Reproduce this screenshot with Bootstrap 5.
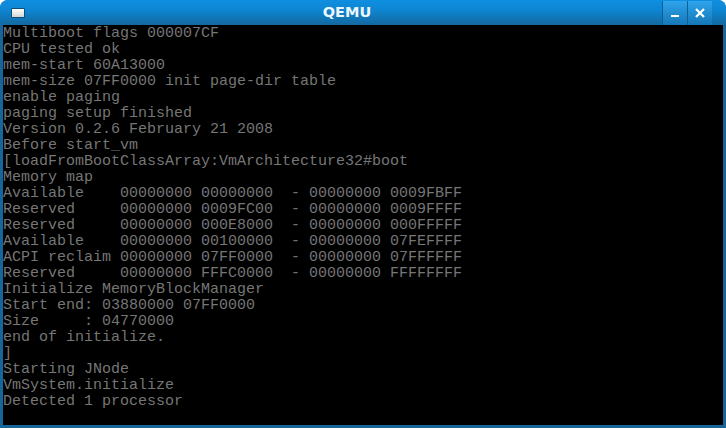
<!DOCTYPE html>
<html lang="en">
<head>
<meta charset="utf-8">
<title>QEMU</title>
<link href="https://cdn.jsdelivr.net/npm/bootstrap@5.3.0/dist/css/bootstrap.min.css" rel="stylesheet">
<style>
html,body{height:428px;overflow:hidden;background:#fff}
.qwin{width:726px;height:428px;background:#17669a;border-radius:8px 8px 0 0;overflow:hidden}
.qbar{height:25px;background:linear-gradient(#0f8fe0 0,#0d86d2 40%,#14689f 100%);flex:none}
.qmenu{width:14px;height:10px;margin-left:11px;margin-top:1px;background:linear-gradient(#fff,#d4d4d4);border:1px solid #0c4f7c;border-radius:1px}
.qtitle{font:bold 14.5px/25px "DejaVu Sans",sans-serif;color:#eef6fc;padding-left:7px}
.qbtn{width:25px;height:24px;margin-top:1px;background:linear-gradient(#2ea4ec,#1577b8);border-left:1px solid #0f5f94;color:#fff}
.qend{width:14px}
.qscreen{flex:1;margin:0 3px 3px 3px;background:#000;padding:1px 0 0;color:#767676;font:15px/16px "Liberation Mono",monospace;white-space:pre;overflow:hidden}
</style>
</head>
<body class="m-0">
<div class="qwin d-flex flex-column">
  <div class="qbar d-flex align-items-center">
    <div class="qmenu"></div>
    <div class="qtitle flex-grow-1 text-center">QEMU</div>
    <div class="qbtn d-flex align-items-center justify-content-center">
      <svg width="9" height="9" viewBox="0 0 9 9"><rect x="0" y="6" width="8" height="2" fill="#fff"/></svg>
    </div>
    <div class="qbtn d-flex align-items-center justify-content-center">
      <svg width="10" height="10" viewBox="0 0 10 10"><path d="M1 1L9 9M9 1L1 9" stroke="#fff" stroke-width="2.2" fill="none"/></svg>
    </div>
    <div class="qend"></div>
  </div>
  <div class="qscreen">Multiboot flags 000007CF
CPU tested ok
mem-start 60A13000
mem-size 07FF0000 init page-dir table
enable paging
paging setup finished
Version 0.2.6 February 21 2008
Before start_vm
[loadFromBootClassArray:VmArchitecture32#boot
Memory map
Available    00000000 00000000  - 00000000 0009FBFF
Reserved     00000000 0009FC00  - 00000000 0009FFFF
Reserved     00000000 000E8000  - 00000000 000FFFFF
Available    00000000 00100000  - 00000000 07FEFFFF
ACPI reclaim 00000000 07FF0000  - 00000000 07FFFFFF
Reserved     00000000 FFFC0000  - 00000000 FFFFFFFF
Initialize MemoryBlockManager
Start end: 03880000 07FF0000
Size     : 04770000
end of initialize.
]
Starting JNode
VmSystem.initialize
Detected 1 processor</div>
</div>
<script src="https://cdn.jsdelivr.net/npm/bootstrap@5.3.0/dist/js/bootstrap.bundle.min.js"></script>
</body>
</html>
